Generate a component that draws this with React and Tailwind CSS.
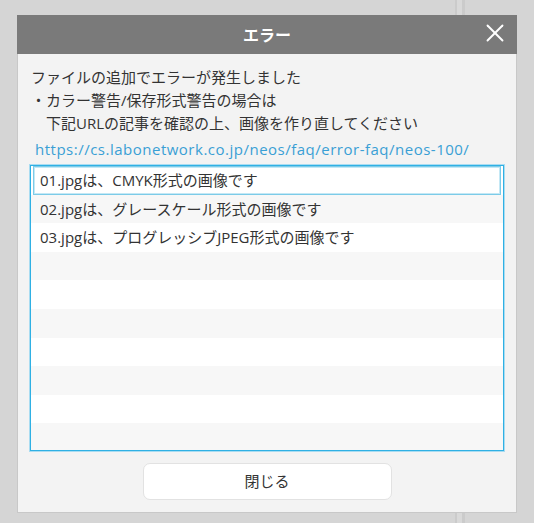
import { X } from "lucide-react";

const files = [
  "01.jpgは、CMYK形式の画像です",
  "02.jpgは、グレースケール形式の画像です",
  "03.jpgは、プログレッシブJPEG形式の画像です",
  "",
  "",
  "",
  "",
  "",
  "",
  "",
];

const font = { fontFamily: '"Open Sans", "Noto Sans CJK JP", sans-serif' };

const App = () => {
  return (
    <div className="relative h-[523px] w-[534px] overflow-hidden bg-[#d5d5d5]" style={font}>
      {/* page behind the overlay */}
      <div className="absolute left-[455px] top-0 flex h-full w-[10px]">
        <div className="w-[2px] bg-[#cbcbcb]" />
        <div className="flex-1 bg-[#d9d9d9]" />
        <div className="w-[3px] bg-[#cbcbcb]" />
      </div>

      {/* Dialog */}
      <div className="relative ml-[17px] mt-[15px] w-[500px]">
        <header className="relative flex h-[39px] items-center justify-center bg-[#7a7a7a]">
          <h1 className="text-[16px] font-bold text-white">エラー</h1>
          <button className="absolute right-[7px] top-[3px] text-white">
            <X size={30} strokeWidth={1.5} />
          </button>
        </header>

        <div className="border-x border-b border-[#c8c8c8] bg-[#f3f3f3] px-[12px] pb-[12px] pt-[12px]">
          <div className="pl-[1px] text-[15px] leading-[23px] text-[#333]">
            <p>ファイルの追加でエラーが発生しました</p>
            <p>・カラー警告/保存形式警告の場合は</p>
            <p className="pl-[15px]">下記URLの記事を確認の上、画像を作り直してください</p>
          </div>
          <a className="mt-[3px] block pl-[5px] text-[15px] leading-[22px] tracking-[0.5px] text-[#3a9fd5]">
            https://cs.labonetwork.co.jp/neos/faq/error-faq/neos-100/
          </a>

          {/* File list */}
          <div className="mt-[5px] h-[286px] overflow-hidden border border-[#2fb0e4] bg-white shadow-[0_0_0_1px_#a9dcf1]">
            {files.map((name, i) => (
              <div
                key={i}
                className={`flex h-[28.6px] items-center px-[9px] text-[15px] text-[#333] ${
                  i % 2 === 0 ? "bg-white" : "bg-[#f7f7f7]"
                } ${i === 0 ? "mx-[2px] border border-[#7ccbe8] ring-1 ring-[#c4e8f5] ring-inset pl-[6px]" : ""}`}
              >
                {name}
              </div>
            ))}
          </div>

          <div className="mt-[12px] flex justify-center">
            <button className="h-[37px] w-[249px] rounded-[7px] border border-[#e2e2e2] bg-white text-[15px] text-[#333]">
              閉じる
            </button>
          </div>
        </div>
      </div>
    </div>
  );
};

export default App;
